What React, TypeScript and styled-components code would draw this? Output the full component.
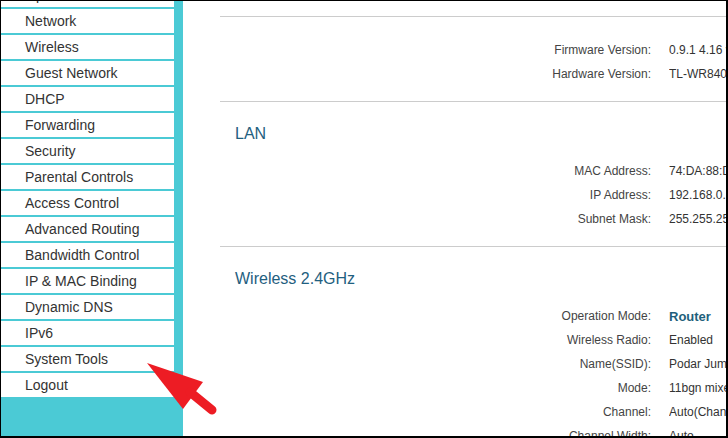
import React from "react";
import styled, { createGlobalStyle } from "styled-components";

const GlobalStyle = createGlobalStyle`
    html, body {
        margin: 0;
        padding: 0;
        background: #ffffff;
    }
    body {
        font-family: "Liberation Sans", Arial, sans-serif;
    }
`;

const MENU = [
    "Operation Mode",
    "Network",
    "Wireless",
    "Guest Network",
    "DHCP",
    "Forwarding",
    "Security",
    "Parental Controls",
    "Access Control",
    "Advanced Routing",
    "Bandwidth Control",
    "IP & MAC Binding",
    "Dynamic DNS",
    "IPv6",
    "System Tools",
    "Logout",
];

type Row = { label: string; value: string; strong?: boolean };

const SECTIONS: { title?: string; rows: Row[] }[] = [
    {
        rows: [
            { label: "Firmware Version:", value: "0.9.1 4.16 v0001.0 Build 180827 Rel.64282n" },
            { label: "Hardware Version:", value: "TL-WR840N v6 00000000" },
        ],
    },
    {
        title: "LAN",
        rows: [
            { label: "MAC Address:", value: "74:DA:88:D1:2C:5E" },
            { label: "IP Address:", value: "192.168.0.1" },
            { label: "Subnet Mask:", value: "255.255.255.0" },
        ],
    },
    {
        title: "Wireless 2.4GHz",
        rows: [
            { label: "Operation Mode:", value: "Router", strong: true },
            { label: "Wireless Radio:", value: "Enabled" },
            { label: "Name(SSID):", value: "Podar Jumbo Kids" },
            { label: "Mode:", value: "11bgn mixed" },
            { label: "Channel:", value: "Auto(Channel 6)" },
            { label: "Channel Width:", value: "Auto" },
        ],
    },
];

const App = () => {
    return (
        <>
            <GlobalStyle />
            <Frame>
                <Sidebar>
                    <MenuList>
                        {MENU.map(item => (
                            <MenuItem key={item}>{item}</MenuItem>
                        ))}
                    </MenuList>
                </Sidebar>
                <Main>
                    {SECTIONS.map((section, i) => (
                        <Section key={i}>
                            {section.title && <Heading>{section.title}</Heading>}
                            <InfoTable>
                                {section.rows.map(row => (
                                    <React.Fragment key={row.label}>
                                        <Label>{row.label}</Label>
                                        <Value strong={row.strong}>{row.value}</Value>
                                    </React.Fragment>
                                ))}
                            </InfoTable>
                        </Section>
                    ))}
                </Main>
                <Pointer viewBox="0 0 728 438">
                    <polygon points="147,363 203,382 183,409" fill="#ed1c24" />
                    <line
                        x1="190"
                        y1="392"
                        x2="212"
                        y2="410"
                        stroke="#ed1c24"
                        strokeWidth="9"
                        strokeLinecap="round"
                    />
                </Pointer>
            </Frame>
        </>
    );
};

export default App;

const Frame = styled.div`
    position: relative;
    display: flex;
    width: 728px;
    height: 438px;
    box-sizing: border-box;
    border-top: 1px solid #000;
    border-left: 1px solid #000;
    border-right: 2px solid #000;
    border-bottom: 2px solid #000;
    overflow: hidden;
    background: #fff;
`;

const Sidebar = styled.div`
    flex: 0 0 182px;
    background: #4bcad5;
    overflow: hidden;
`;

const MenuList = styled.ul`
    list-style: none;
    margin: -18px 0 0 0;
    padding: 0;
`;

const MenuItem = styled.li`
    display: flex;
    align-items: center;
    width: 173px;
    height: 24px;
    margin-bottom: 2px;
    padding-left: 24px;
    box-sizing: border-box;
    background: #fff;
    color: #333;
    font-size: 14px;
    white-space: nowrap;
`;

const Main = styled.div`
    flex: 1;
    min-width: 0;
    padding: 15px 0 0 37px;
    overflow: hidden;
`;

const Section = styled.section`
    border-top: 1px solid #cccccc;
    padding: 21px 0 15px 0;
`;

const Heading = styled.h2`
    margin: 1px 0 15px 15px;
    height: 20px;
    line-height: 20px;
    font-size: 16px;
    font-weight: normal;
    color: #1f6080;
`;

const InfoTable = styled.div`
    display: grid;
    grid-template-columns: 431px 1fr;
    grid-auto-rows: 24px;
    column-gap: 18px;
    align-items: center;
    font-size: 12px;
    white-space: nowrap;
`;

const Label = styled.div`
    text-align: right;
    color: #444;
`;

const Value = styled.div<{ strong?: boolean }>`
    color: ${props => (props.strong ? "#1f5f7c" : "#333")};
    font-size: ${props => (props.strong ? "13px" : "12px")};
    font-weight: ${props => (props.strong ? "bold" : "normal")};
    overflow: hidden;
`;

const Pointer = styled.svg`
    position: absolute;
    left: -1px;
    top: -1px;
    width: 728px;
    height: 438px;
    pointer-events: none;
`;
